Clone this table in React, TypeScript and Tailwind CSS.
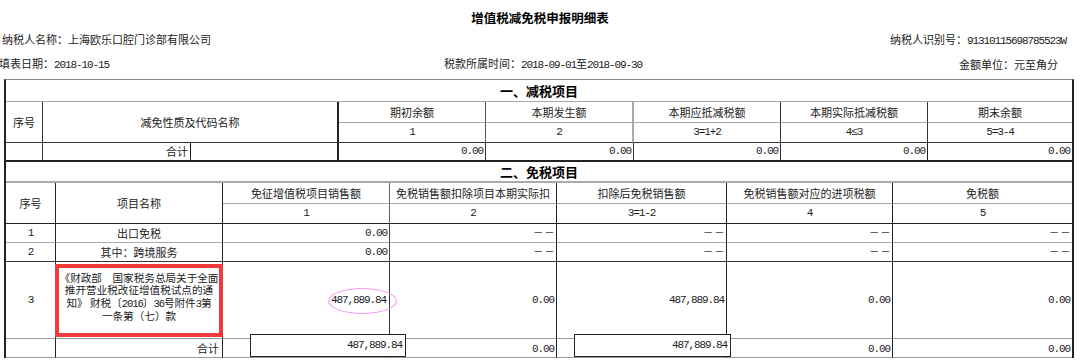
import React from 'react';

// digits in the form are half-width, SimSun-like
function N({ children }: { children: React.ReactNode }) {
  return <span className="font-['Liberation_Mono',monospace] tracking-[-1.1px]">{children}</span>;
}

function Dash() {
  return <span className="font-['Liberation_Mono',monospace] text-[12px] tracking-[4px] -mr-[4px] text-[#555]">——</span>;
}

export default function App() {
  return (
    <div className="w-[1080px] h-[362px] overflow-hidden bg-white text-[11px] leading-none text-[#222] font-['Noto_Sans_CJK_SC',sans-serif]">
      <div className="pt-[11px] text-center text-[12.5px] leading-[14px] font-bold text-black">增值税减免税申报明细表</div>

      <div className="mt-[7px] flex justify-between leading-[14px] pl-[2px] pr-[14px]">
        <span>纳税人名称：上海欧乐口腔门诊部有限公司</span>
        <span>
          纳税人识别号：<N>91310115698785523W</N>
        </span>
      </div>

      <div className="mt-[8px] flex leading-[14px]">
        <span className="w-[445px] -ml-[1px]">
          填表日期：<N>2018-10-15</N>
        </span>
        <span className="flex-1">
          税款所属时间：<N>2018-09-01</N>至<N>2018-09-30</N>
        </span>
        <span className="pr-[22px] pt-[1px]">金额单位：元至角分</span>
      </div>

      <div className="relative mt-[7px] ml-[4px] w-[1070px] border-x-2 border-x-[#222] border-t border-t-[#888]">
        {/* 一、减税项目 */}
        <div className="grid grid-cols-[37px_148px_148px_147px_148px_147px_147px_144px] grid-rows-[22px_21px_20px_19px]">
          <div className="col-span-8 flex items-center justify-center border-b border-b-[#a8a8a8] text-[13px] font-bold text-black">一、减税项目</div>

          <div className="row-span-2 flex items-center justify-center border-r border-b border-r-[#333] border-b-[#333]">序号</div>
          <div className="col-span-2 row-span-2 flex items-center justify-center border-r-2 border-b border-r-[#222] border-b-[#333]">减免性质及代码名称</div>
          <div className="flex items-center justify-center border-r border-b border-r-[#555] border-b-[#a8a8a8]">期初余额</div>
          <div className="flex items-center justify-center border-r-2 border-b border-r-[#aaa] border-b-[#a8a8a8]">本期发生额</div>
          <div className="flex items-center justify-center border-r border-b border-r-[#333] border-b-[#a8a8a8]">本期应抵减税额</div>
          <div className="flex items-center justify-center border-r border-b border-r-[#333] border-b-[#a8a8a8]">本期实际抵减税额</div>
          <div className="flex items-center justify-center border-b border-b-[#a8a8a8]">期末余额</div>

          <div className="flex items-center justify-center border-r border-b border-r-[#555] border-b-[#333]"><N>1</N></div>
          <div className="flex items-center justify-center border-r-2 border-b border-r-[#aaa] border-b-[#333]"><N>2</N></div>
          <div className="flex items-center justify-center border-r border-b border-r-[#333] border-b-[#333]"><N>3=1+2</N></div>
          <div className="flex items-center justify-center border-r border-b border-r-[#333] border-b-[#333]"><N>4≤3</N></div>
          <div className="flex items-center justify-center border-b border-b-[#333]"><N>5=3-4</N></div>

          <div className="border-r border-b-2 border-r-[#333] border-b-[#222]"></div>
          <div className="flex items-center justify-end pr-[2px] border-r border-b-2 border-r-[#222] border-b-[#222]">合计</div>
          <div className="border-r-2 border-b-2 border-r-[#222] border-b-[#222]"></div>
          <div className="flex items-center justify-end pr-[2px] border-r border-b-2 border-r-[#333] border-b-[#222]"><N>0.00</N></div>
          <div className="flex items-center justify-end pr-[2px] border-r border-b-2 border-r-[#333] border-b-[#222]"><N>0.00</N></div>
          <div className="flex items-center justify-end pr-[2px] border-r border-b-2 border-r-[#333] border-b-[#222]"><N>0.00</N></div>
          <div className="flex items-center justify-end pr-[2px] border-r border-b-2 border-r-[#222] border-b-[#222]"><N>0.00</N></div>
          <div className="flex items-center justify-end pr-[2px] border-b-2 border-b-[#222]"><N>0.00</N></div>
        </div>

        {/* 二、免税项目 */}
        <div className="grid grid-cols-[50px_167px_167px_167px_170px_166px_179px] grid-rows-[21px_21px_20px_19px_19px_77px_19px]">
          <div className="col-span-7 flex items-center justify-center border-b-2 border-b-[#aaa] text-[13px] font-bold text-black">二、免税项目</div>

          <div className="row-span-2 flex items-center justify-center border-r border-b border-r-[#222] border-b-[#222]">序号</div>
          <div className="row-span-2 flex items-center justify-center border-r border-b border-r-[#222] border-b-[#222]">项目名称</div>
          <div className="flex items-center justify-center border-r border-b border-r-[#666] border-b-[#a8a8a8]">免征增值税项目销售额</div>
          <div className="flex items-center justify-center overflow-hidden whitespace-nowrap border-r border-b border-r-[#222] border-b-[#a8a8a8]">免税销售额扣除项目本期实际扣</div>
          <div className="flex items-center justify-center border-r border-b border-r-[#222] border-b-[#a8a8a8]">扣除后免税销售额</div>
          <div className="flex items-center justify-center border-r border-b border-r-[#222] border-b-[#a8a8a8]">免税销售额对应的进项税额</div>
          <div className="flex items-center justify-center border-b border-b-[#a8a8a8]">免税额</div>

          <div className="flex items-center justify-center border-r border-b border-r-[#666] border-b-[#222]"><N>1</N></div>
          <div className="flex items-center justify-center border-r border-b border-r-[#222] border-b-[#222]"><N>2</N></div>
          <div className="flex items-center justify-center border-r border-b border-r-[#222] border-b-[#222]"><N>3=1-2</N></div>
          <div className="flex items-center justify-center border-r border-b border-r-[#222] border-b-[#222]"><N>4</N></div>
          <div className="flex items-center justify-center border-b border-b-[#222]"><N>5</N></div>

          <div className="flex items-center justify-center border-r border-b border-r-[#222] border-b-[#aaa]"><N>1</N></div>
          <div className="flex items-center justify-center border-r border-b border-r-[#222] border-b-[#aaa]">出口免税</div>
          <div className="flex items-center justify-end pr-[2px] border-r border-b border-r-[#444] border-b-[#aaa]"><N>0.00</N></div>
          <div className="flex items-center justify-end pr-[3px] border-r border-b border-r-[#222] border-b-[#aaa]"><Dash /></div>
          <div className="flex items-center justify-end pr-[3px] border-r border-b border-r-[#222] border-b-[#aaa]"><Dash /></div>
          <div className="flex items-center justify-end pr-[3px] border-r border-b border-r-[#222] border-b-[#aaa]"><Dash /></div>
          <div className="flex items-center justify-end pr-[3px] border-b border-b-[#aaa]"><Dash /></div>

          <div className="flex items-center justify-center border-r border-b border-r-[#222] border-b-[#333]"><N>2</N></div>
          <div className="flex items-center justify-center border-r border-b border-r-[#222] border-b-[#333]">其中：跨境服务</div>
          <div className="flex items-center justify-end pr-[2px] border-r border-b border-r-[#444] border-b-[#333]"><N>0.00</N></div>
          <div className="flex items-center justify-end pr-[3px] border-r border-b border-r-[#222] border-b-[#333]"><Dash /></div>
          <div className="flex items-center justify-end pr-[3px] border-r border-b border-r-[#222] border-b-[#333]"><Dash /></div>
          <div className="flex items-center justify-end pr-[3px] border-r border-b border-r-[#222] border-b-[#333]"><Dash /></div>
          <div className="flex items-center justify-end pr-[3px] border-b border-b-[#333]"><Dash /></div>

          <div className="flex items-center justify-center border-r border-b border-r-[#222] border-b-[#999]"><N>3</N></div>
          <div className="flex items-center justify-center pb-[6px] border-r border-b border-r-[#222] border-b-[#999]">
            <div className="text-center text-[10.6px] leading-[12.5px] whitespace-nowrap">
              《财政部　国家税务总局关于全面
              <br />
              推开营业税改征增值税试点的通
              <br />
              知》 财税〔<N>2016</N>〕<N>36</N>号附件<N>3</N>第
              <br />
              一条第（七）款
            </div>
          </div>
          <div className="flex items-center justify-end pr-[3px] border-r border-b border-r-[#333] border-b-[#999]"><N>487,889.84</N></div>
          <div className="flex items-center justify-end pr-[2px] border-r border-b border-r-[#222] border-b-[#999]"><N>0.00</N></div>
          <div className="flex items-center justify-end pr-[2px] border-r border-b border-r-[#222] border-b-[#999]"><N>487,889.84</N></div>
          <div className="flex items-center justify-end pr-[2px] border-r border-b border-r-[#222] border-b-[#999]"><N>0.00</N></div>
          <div className="flex items-center justify-end pr-[2px] border-b border-b-[#999]"><N>0.00</N></div>

          <div className="border-r border-b border-r-[#222] border-b-[#999]"></div>
          <div className="flex items-center justify-end pr-[3px] border-r border-b border-r-[#222] border-b-[#999]">合计</div>
          <div className="border-r border-b border-r-[#333] border-b-[#999]"></div>
          <div className="flex items-center justify-end pr-[2px] pt-[2px] border-r border-b border-r-[#222] border-b-[#999]"><N>0.00</N></div>
          <div className="border-r border-b border-r-[#222] border-b-[#999]"></div>
          <div className="flex items-center justify-end pr-[2px] pt-[2px] border-r border-b border-r-[#222] border-b-[#999]"><N>0.00</N></div>
          <div className="flex items-center justify-end pr-[2px] pt-[2px] border-b border-b-[#999]"><N>0.00</N></div>
        </div>

        {/* annotations laid over the form */}
        <div className="absolute left-[49px] top-[184px] w-[168px] h-[73px] border-[4px] border-[#f23a3a]"></div>
        <div className="absolute left-[322px] top-[208px] w-[69px] h-[26px] rounded-[50%] border border-[#f09cf0]"></div>
        <div className="absolute left-[244px] top-[254px] w-[156px] h-[23px] flex items-center justify-end pr-[3px] bg-white border border-[#222]">
          <N>487,889.84</N>
        </div>
        <div className="absolute left-[568px] top-[254px] w-[157px] h-[23px] flex items-center justify-end pr-[3px] bg-white border border-[#222]">
          <N>487,889.84</N>
        </div>
      </div>
    </div>
  );
}
